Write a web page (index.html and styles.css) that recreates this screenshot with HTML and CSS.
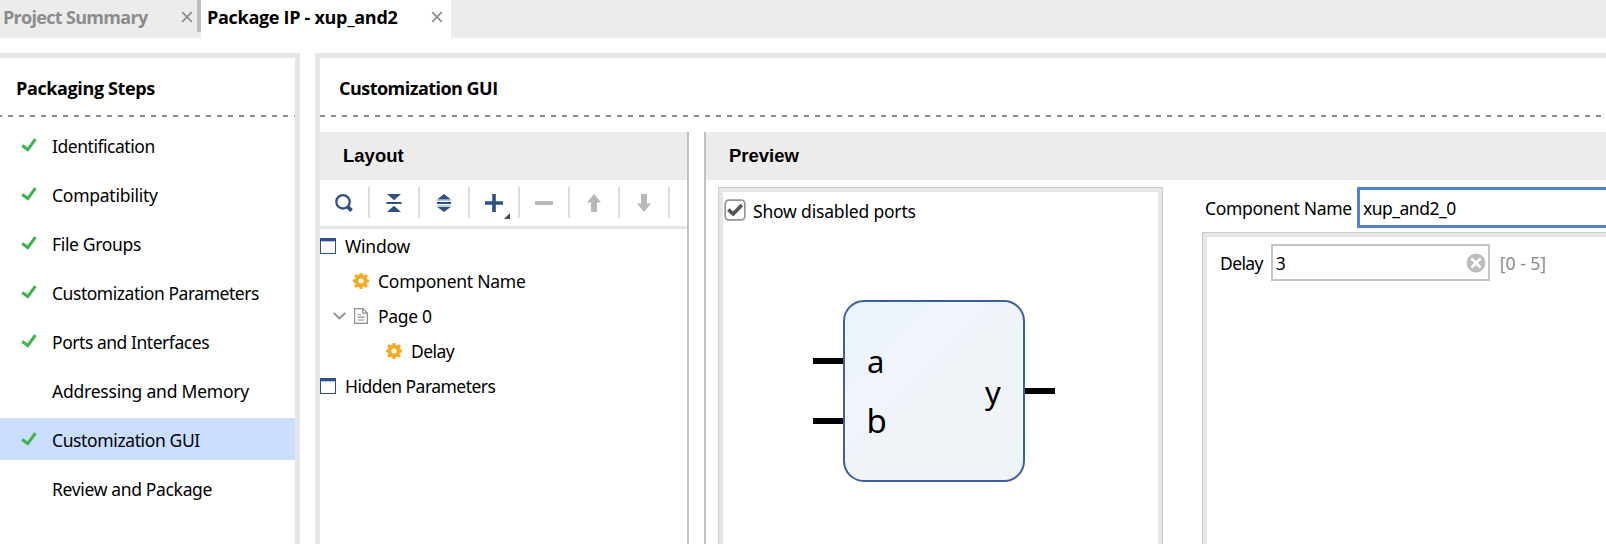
FILE: index.html
```html
<!DOCTYPE html>
<html lang="en">
<head>
<meta charset="utf-8">
<title>Package IP - xup_and2</title>
<link rel="stylesheet" href="styles.css">
</head>
<body>
<svg class="defs" width="0" height="0">
  <symbol id="check" viewBox="0 0 16 14"><path d="M1.2 7.4 6.8 11.6 14.4 1.2" fill="none" stroke="#3fb44c" stroke-width="3.1"/></symbol>
  <symbol id="close" viewBox="0 0 12 12"><path d="M1.2 1.2 10.8 10.8M10.8 1.2 1.2 10.8" stroke="#8c8c8c" stroke-width="1.7" fill="none"/></symbol>
  <symbol id="window" viewBox="0 0 16 16"><path d="M0 0H16V16H0Z" fill="#2f4f88"/><path d="M1 3.5H15V15H1Z" fill="#fff"/><path d="M1 3.5H15" stroke="#b9c4d8"/></symbol>
  <symbol id="gear" viewBox="-8 -8 16 16"><g fill="none" stroke="#f9a91f"><circle r="4.5" stroke-width="3.8"/><path d="M0-5V-8M0 5V8M-5 0H-8M5 0H8M-3.8-3.8-5.9-5.9M3.8-3.8 5.9-5.9M-3.8 3.8-5.9 5.9M3.8 3.8 5.9 5.9" stroke-width="3"/></g></symbol>
</svg>

<nav class="tabs">
  <div class="tab inactive"><span class="ls-69">Project Summary</span><svg class="x"><use href="#close"/></svg></div>
  <div class="tab active"><span class="ls-30">Package IP - xup_and2</span><svg class="x"><use href="#close"/></svg></div>
</nav>

<main class="workspace">
  <aside class="steps">
    <h2 class="title ls-38">Packaging Steps</h2>
    <ul>
      <li><svg class="tick"><use href="#check"/></svg><span class="ls-46">Identification</span></li>
      <li><svg class="tick"><use href="#check"/></svg><span class="ls-25">Compatibility</span></li>
      <li><svg class="tick"><use href="#check"/></svg><span class="ls-34">File Groups</span></li>
      <li><svg class="tick"><use href="#check"/></svg><span class="ls-46">Customization Parameters</span></li>
      <li><svg class="tick"><use href="#check"/></svg><span class="ls-46">Ports and Interfaces</span></li>
      <li><svg class="tick"></svg><span class="ls-22">Addressing and Memory</span></li>
      <li class="selected"><svg class="tick"><use href="#check"/></svg><span class="ls-38">Customization GUI</span></li>
      <li><svg class="tick"></svg><span class="ls-34">Review and Package</span></li>
    </ul>
  </aside>

  <section class="editor">
    <h2 class="title ls-53">Customization GUI</h2>
    <div class="split">
      <section class="layout">
        <h3>Layout</h3>
        <div class="toolbar">
          <div class="tool"><svg viewBox="0 0 22 22"><circle cx="10" cy="9.8" r="6.7" fill="none" stroke="#2f4f88" stroke-width="2.3"/><path d="M14 14.2 18.6 18.6" stroke="#2f4f88" stroke-width="3.8"/></svg></div>
          <div class="tool"><svg viewBox="0 0 22 22" fill="#2f4f88"><path d="M4 2H18L11 8.2ZM4 20H18L11 13.8Z"/><path d="M3.5 10H18.5V12H3.5Z"/></svg></div>
          <div class="tool"><svg viewBox="0 0 22 22" fill="#2f4f88"><path d="M4 7.5 11 2 18 7.5ZM4 14.7 11 20 18 14.7Z"/><path d="M4 10H18V12H4Z"/><path d="M4 8H18V9H4ZM4 13H18V14H4Z" opacity=".3"/></svg></div>
          <div class="tool"><svg viewBox="0 0 22 22"><path d="M11 2V20M2 11H20" stroke="#2f4f88" stroke-width="3.6"/></svg><svg class="corner" viewBox="0 0 6 6"><path d="M6 0V6H0Z" fill="#484848"/></svg></div>
          <div class="tool"><svg viewBox="0 0 22 22"><path d="M2 11H20" stroke="#b8b8b8" stroke-width="4"/></svg></div>
          <div class="tool"><svg viewBox="0 0 22 22"><path d="M11 2 18 10.5H14V20H8V10.5H4Z" fill="#b8b8b8"/></svg></div>
          <div class="tool"><svg viewBox="0 0 22 22"><path d="M11 20 18 11.5H14V2H8V11.5H4Z" fill="#b8b8b8"/></svg></div>
        </div>
        <div class="tree">
          <div class="node"><svg class="icon"><use href="#window"/></svg><span class="ls-22">Window</span></div>
          <div class="node level1"><svg class="icon"><use href="#gear"/></svg><span class="ls-25">Component Name</span></div>
          <div class="node page"><svg class="chevron" viewBox="0 0 13 8"><path d="M.7.8 6.5 6.5 12.3.8" fill="none" stroke="#8c8c8c" stroke-width="1.8"/></svg><svg class="icon" viewBox="0 0 16 16"><path d="M1.6.6H10L14.4 5V15.4H1.6ZM9.7.8V5.2H14.2M4.5 6.5H8M4.5 9.2H11.5M4.5 12H11.5" fill="none" stroke="#8f8f8f" stroke-width="1.2"/></svg><span class="ls-34">Page 0</span></div>
          <div class="node level2"><svg class="icon"><use href="#gear"/></svg><span class="ls-53">Delay</span></div>
          <div class="node"><svg class="icon"><use href="#window"/></svg><span class="ls-53">Hidden Parameters</span></div>
        </div>
      </section>

      <section class="preview">
        <h3>Preview</h3>
        <div class="content">
          <div class="symbol-frame"><div class="symbol-view">
            <label class="ports"><svg viewBox="0 0 22 22"><rect x="1.2" y="1.2" width="19.6" height="19.6" rx="3.5" fill="#fff" stroke="#949494" stroke-width="1.7"/><path d="M4.3 10.7 9.2 15.1 17.8 6" fill="none" stroke="#555" stroke-width="3.6"/></svg><span class="ls-18">Show disabled ports</span></label>
            <svg class="block" viewBox="0 0 242 182">
              <defs><linearGradient id="fill" x1="0" y1="0" x2="1" y2="1"><stop offset="0" stop-color="#ebf5fd"/><stop offset=".28" stop-color="#eff4fd"/><stop offset=".4" stop-color="#eff4fd"/><stop offset=".5" stop-color="#eff4f8"/><stop offset=".85" stop-color="#f0f4f8"/><stop offset="1" stop-color="#edf4f8"/></linearGradient></defs>
              <path d="M0 61H31M0 121H31M211 91H242" stroke="#000" stroke-width="6"/>
              <rect x="31" y="1" width="180" height="180" rx="20" fill="url(#fill)" stroke="#3d5f9f" stroke-width="2"/>
              <text x="54" y="72.5">a</text><text class="tall" x="53.5" y="132.5">b</text><text x="172" y="103.5">y</text>
            </svg>
          </div></div>
          <div class="params">
            <div class="name-row"><span class="ls-30">Component Name</span><div class="name-input"><span class="ls-49">xup_and2_0</span></div></div>
            <div class="param-frame"><div class="param-view">
              <span class="ls-62">Delay</span>
              <div class="delay-input"><span>3</span><svg viewBox="0 0 20 20"><circle cx="10" cy="10" r="9.5" fill="#bdbdbd"/><path d="M5.5 5.5 14.5 14.5M14.5 5.5 5.5 14.5" stroke="#fff" stroke-width="2.6"/></svg></div>
              <span class="range">[0 - 5]</span>
            </div></div>
          </div>
        </div>
      </section>
    </div>
  </section>
</main>
</body>
</html>
```
FILE: styles.css
```css
* { box-sizing: border-box; }
body { margin: 0; width: 1606px; height: 544px; overflow: hidden; background: #fff; color: #000; font: 17.5px/24px "Noto Sans", sans-serif; }
span { white-space: nowrap; }
svg { display: block; flex: none; }
.defs { position: absolute; }
h2, h3, ul { margin: 0; padding: 0; }
ul { list-style: none; }

.ls-18 { letter-spacing: -.18px; }
.ls-22 { letter-spacing: -.22px; }
.ls-25 { letter-spacing: -.25px; }
.ls-30 { letter-spacing: -.3px; }
.ls-34 { letter-spacing: -.34px; }
.ls-38 { letter-spacing: -.38px; }
.ls-46 { letter-spacing: -.46px; }
.ls-49 { letter-spacing: -.49px; }
.ls-53 { letter-spacing: -.53px; }
.ls-62 { letter-spacing: -.62px; }
.ls-69 { letter-spacing: -.69px; }

.tabs { display: flex; height: 38px; background: #ececec; font: bold 18px/24px "Open Sans", sans-serif; }
.tab { display: flex; justify-content: space-between; padding: 5px 8px 0 6px; }
.inactive { width: 201px; height: 32px; padding: 5px 4px 0 3px; color: #8c8c8c; border-right: 4px solid #bdbdbd; }
.active { width: 250px; background: #fff; }
.x { width: 12px; height: 12px; margin-top: 6px; }

.workspace { display: flex; height: 506px; padding-top: 15px; gap: 15px; }
.title { height: 61px; padding: 18px 0 0 16px; font: bold 18px/24px "Open Sans", sans-serif; background: repeating-linear-gradient(90deg, #8c8c8c 0 5px, transparent 5px 11px) 0 57px / 100% 2px no-repeat; }
.steps { width: 300px; border: solid #e6e6e6; border-width: 5px 5px 0 0; }
.steps .title { background-position: -3px 57px; background-size: 300px 2px; }
.steps ul { display: grid; grid-auto-rows: 42px; row-gap: 7px; padding-top: 5px; }
.steps li { display: flex; padding: 10px 0 0 21px; gap: 15px; }
.steps .selected { background: #cadeff; }
.tick { width: 16px; height: 14px; margin-top: 4px; }
.editor { flex: 1; border: solid #e6e6e6; border-width: 5px 0 0 5px; }
.editor .title { padding-left: 19px; }

.split { display: flex; height: 425px; padding-top: 13px; gap: 15px; }
h3 { height: 48px; padding: 12px 23px; background: #ececec; font: bold 18.5px/24px "Liberation Sans", Arial, sans-serif; }
.layout { width: 369px; border-right: 2px solid #c0c0c0; }
.toolbar { display: flex; height: 49px; padding-top: 7px; border-bottom: 3px solid #e6e6e6; }
.tool { position: relative; width: 50px; height: 31px; padding: 5px 0 0 13px; border-right: 2px solid #dcdcdc; }
.tool > svg { width: 22px; height: 22px; }
.tool .corner { position: absolute; right: 8px; bottom: -1px; width: 6px; height: 6px; }
.node { display: flex; align-items: center; height: 35px; gap: 9px; padding-bottom: 2px; }
.icon { width: 16px; height: 16px; }
.level1 { padding-left: 33px; }
.level2 { padding-left: 66px; }
.page { padding-left: 13px; }
.page .chevron { width: 13px; height: 8px; margin-right: -2px; }

.preview { flex: 1; border-left: 2px solid #c0c0c0; }
.content { display: flex; height: 364px; padding: 7px 0 0 12px; }
.symbol-frame { width: 445px; border: 1px solid #ccc; border-bottom: 0; }
.symbol-view { height: 100%; border: 4px solid #e6e6e6; border-bottom: 0; }
.ports { display: flex; gap: 7px; padding: 7px 0 0 1px; height: 108px; }
.ports svg { width: 22px; height: 22px; }
.block { width: 242px; height: 182px; margin-left: 90px; }
.block text { font: 31px "Noto Sans", sans-serif; }
.block .tall { font-size: 33px; }
.params { flex: 1; padding-left: 39px; }
.name-row { display: flex; align-items: center; height: 41px; padding-left: 3px; gap: 5px; }
.name-input { flex: 1; height: 41px; padding: 6px 3px; border: 3px solid #5180d0; border-right: 0; }
.param-frame { height: 312px; margin-top: 4px; border: solid #ccc; border-width: 1px 0 0 1px; }
.param-view { display: flex; align-items: flex-start; height: 311px; padding: 7px 0 0 13px; border: solid #e6e6e6; border-width: 4px 0 0 4px; line-height: 38px; }
.delay-input { display: flex; justify-content: space-between; align-items: center; width: 219px; height: 37px; margin: 0 10px 0 8px; padding: 0 3px; border: 2px solid #c6c6c6; }
.delay-input svg { width: 20px; height: 20px; margin-right: -1px; }
.range { color: #8c8c8c; }
```
